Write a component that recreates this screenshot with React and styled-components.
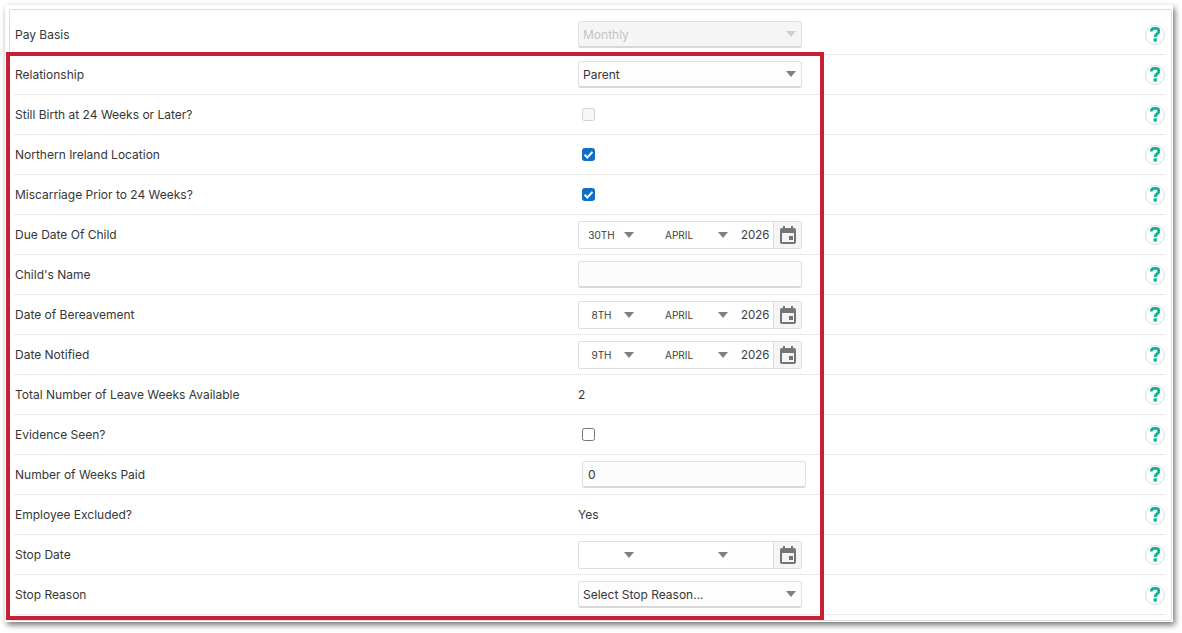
import React from "react";
import styled, {createGlobalStyle} from 'styled-components'

const Global = createGlobalStyle`
  html, body {
    margin: 0;
    padding: 0;
    background: #fff;
    overflow: hidden;
  }
  body {
    font-family: Inter, "Liberation Sans", sans-serif;
    font-size: 12px;
    color: #333;
  }
`

const Caret = () => (
    <svg width="10" height="6" viewBox="0 0 10 6">
        <path d="M0 0H10L5 6Z" fill="currentColor"/>
    </svg>
)

const CalendarIcon = () => (
    <svg width="16" height="18" viewBox="0 0 16 18">
        <path fillRule="evenodd"
              d="M3 0H5V2H11V0H13V2H14C15.1 2 16 2.9 16 4V16C16 17.1 15.1 18 14 18H2C0.9 18 0 17.1 0 16V4C0 2.9 0.9 2 2 2H3V0ZM2 7V16H14V7H2Z"
              fill="#757575"/>
        <rect x="9" y="10" width="4" height="4" fill="#757575"/>
    </svg>
)

const HelpIcon = () => (
    <HelpBadge>
        <svg width="10" height="15" viewBox="0 0 10 15">
            <path d="M1.1 4.5C1.2 2.4 2.8 1.3 5 1.3C7.4 1.3 8.8 2.5 8.8 4.2C8.8 5.6 7.9 6.2 6.9 6.9C5.7 7.7 5.2 8.2 5.2 9.9"
                  fill="none" stroke="#0fb696" strokeWidth="3"/>
            <rect x="3.5" y="11.3" width="3.4" height="3.3" fill="#0fb696"/>
        </svg>
    </HelpBadge>
)

const Select = ({value, disabled}) => (
    <SelectBox disabled={disabled}>
        <span>{value}</span>
        <Arrow disabled={disabled}><Caret/></Arrow>
    </SelectBox>
)

const DatePicker = ({day, month, year}) => (
    <DateBox>
        <DaySlot>
            <DateText>{day}</DateText>
            <Arrow><Caret/></Arrow>
        </DaySlot>
        <MonthSlot>
            <DateText>{month}</DateText>
            <Arrow><Caret/></Arrow>
        </MonthSlot>
        <YearSlot>{year}</YearSlot>
        <CalendarButton><CalendarIcon/></CalendarButton>
    </DateBox>
)

const Check = ({checked, disabled}) => (
    <CheckBox checked={checked} disabled={disabled}>
        {checked && (
            <svg width="13" height="13" viewBox="0 0 13 13">
                <path d="M2.6 6.8L5.3 9.5L10.5 3.8" fill="none" stroke="#fff" strokeWidth="2"/>
            </svg>
        )}
    </CheckBox>
)

export default function App() {
    const rows = [
        {label: "Pay Basis", field: <Select value="Monthly" disabled/>},
        {label: "Relationship", field: <Select value="Parent"/>},
        {label: "Still Birth at 24 Weeks or Later?", field: <Check disabled/>},
        {label: "Northern Ireland Location", field: <Check checked/>},
        {label: "Miscarriage Prior to 24 Weeks?", field: <Check checked/>},
        {label: "Due Date Of Child", field: <DatePicker day="30TH" month="APRIL" year="2026"/>},
        {label: "Child's Name", field: <TextInput/>},
        {label: "Date of Bereavement", field: <DatePicker day="8TH" month="APRIL" year="2026"/>},
        {label: "Date Notified", field: <DatePicker day="9TH" month="APRIL" year="2026"/>},
        {label: "Total Number of Leave Weeks Available", field: <span>2</span>},
        {label: "Evidence Seen?", field: <Check/>},
        {label: "Number of Weeks Paid", field: <NumberInput>0</NumberInput>},
        {label: "Employee Excluded?", field: <span>Yes</span>},
        {label: "Stop Date", field: <DatePicker/>},
        {label: "Stop Reason", field: <Select value="Select Stop Reason..."/>},
    ]
    return (
        <Page>
            <Global/>
            <Sheet>
                <Panel>
                    {rows.map((row) => (
                        <Row key={row.label}>
                            <Label>{row.label}</Label>
                            <Field>{row.field}</Field>
                            <HelpIcon/>
                        </Row>
                    ))}
                </Panel>
            </Sheet>
            <Highlight/>
        </Page>
    );
}

const Page = styled.div`
  position: relative;
  width: 1182px;
  height: 633px;
  box-sizing: border-box;
  padding: 5px 9px 8px 5px;
  background: #fff;
  overflow: hidden;
`

const Sheet = styled.div`
  box-sizing: border-box;
  height: 617px;
  padding: 4px 1px 0 4px;
  background: #fff;
  box-shadow: 2px 3px 6px 0 rgba(0, 0, 0, 0.55);
`

const Panel = styled.div`
  box-sizing: border-box;
  height: 612px;
  padding: 5px 6px 0 5px;
  border: 1px solid #dcdcdc;
  border-radius: 2px;
`

const Row = styled.div`
  box-sizing: border-box;
  height: 40px;
  display: flex;
  align-items: center;
  border-bottom: 1px dotted #d4d4d4;
`

const Label = styled.div`
  flex: 0 0 563px;
  font-size: 12px;
  color: #363636;
`

const Field = styled.div`
  flex: 1;
  display: flex;
  align-items: center;
  color: #363636;
`

const SelectBox = styled.div`
  box-sizing: border-box;
  width: 224px;
  height: 27px;
  padding: 0 5px 0 4px;
  display: flex;
  align-items: center;
  justify-content: space-between;
  border: 1px solid #e0e0e0;
  border-bottom: 2px solid #d8d8d8;
  border-radius: 3px;
  background: ${props => props.disabled ? '#f5f5f5' : '#fdfdfd'};
  color: ${props => props.disabled ? '#c4c4c4' : '#363636'};
`

const Arrow = styled.span`
  display: inline-flex;
  color: ${props => props.disabled ? '#d0d0d0' : '#808080'};
`

const DateBox = styled.div`
  box-sizing: border-box;
  width: 224px;
  height: 28px;
  display: flex;
  align-items: center;
  border: 1px solid #dedede;
  border-radius: 2px;
  background: #fff;
`

const DaySlot = styled.div`
  flex: 0 0 55px;
  display: flex;
  align-items: center;
  font-size: 10px;
`

const MonthSlot = styled.div`
  box-sizing: border-box;
  flex: 0 0 99px;
  padding: 0 5px 0 31px;
  display: flex;
  align-items: center;
  justify-content: space-between;
  font-size: 10px;
`

const DateText = styled.span`
  flex: 1;
  color: #3c3c3c;
  ${DaySlot} & {
    text-align: center;
  }
`

const YearSlot = styled.div`
  flex: 1;
  height: 26px;
  line-height: 26px;
  padding-left: 8px;
  font-size: 11.5px;
  background: #fefefe;
  color: #3c3c3c;
`

const CalendarButton = styled.div`
  flex: 0 0 27px;
  align-self: stretch;
  display: flex;
  align-items: center;
  justify-content: center;
  border-left: 1px solid #dedede;
  background: #f5f5f5;
`

const CheckBox = styled.div`
  box-sizing: border-box;
  width: 13px;
  height: 13px;
  margin-left: 4px;
  display: flex;
  border-radius: 2.5px;
  border: 1px solid ${props => props.checked ? '#0f6fc6' : props.disabled ? '#d2d2d2' : '#767676'};
  background: ${props => props.checked ? '#0f6fc6' : props.disabled ? '#f7f7f7' : '#fff'};
  svg {
    margin: -1px;
  }
`

const TextInput = styled.div`
  box-sizing: border-box;
  width: 224px;
  height: 27px;
  border: 1px solid #e0e0e0;
  border-bottom: 2px solid #d8d8d8;
  border-radius: 3px;
  background: #fcfcfc;
`

const NumberInput = styled(TextInput)`
  margin-left: 4px;
  padding-left: 5px;
  line-height: 25px;
  color: #363636;
`

const HelpBadge = styled.div`
  box-sizing: border-box;
  width: 20px;
  height: 20px;
  flex: none;
  display: flex;
  align-items: center;
  justify-content: center;
  border: 1px solid #dcdcdc;
  border-radius: 50%;
  background: #fff;
`

const Highlight = styled.div`
  position: absolute;
  left: 6px;
  top: 52px;
  width: 818px;
  height: 568px;
  box-sizing: border-box;
  border: 4px solid #c62036;
  pointer-events: none;
`
